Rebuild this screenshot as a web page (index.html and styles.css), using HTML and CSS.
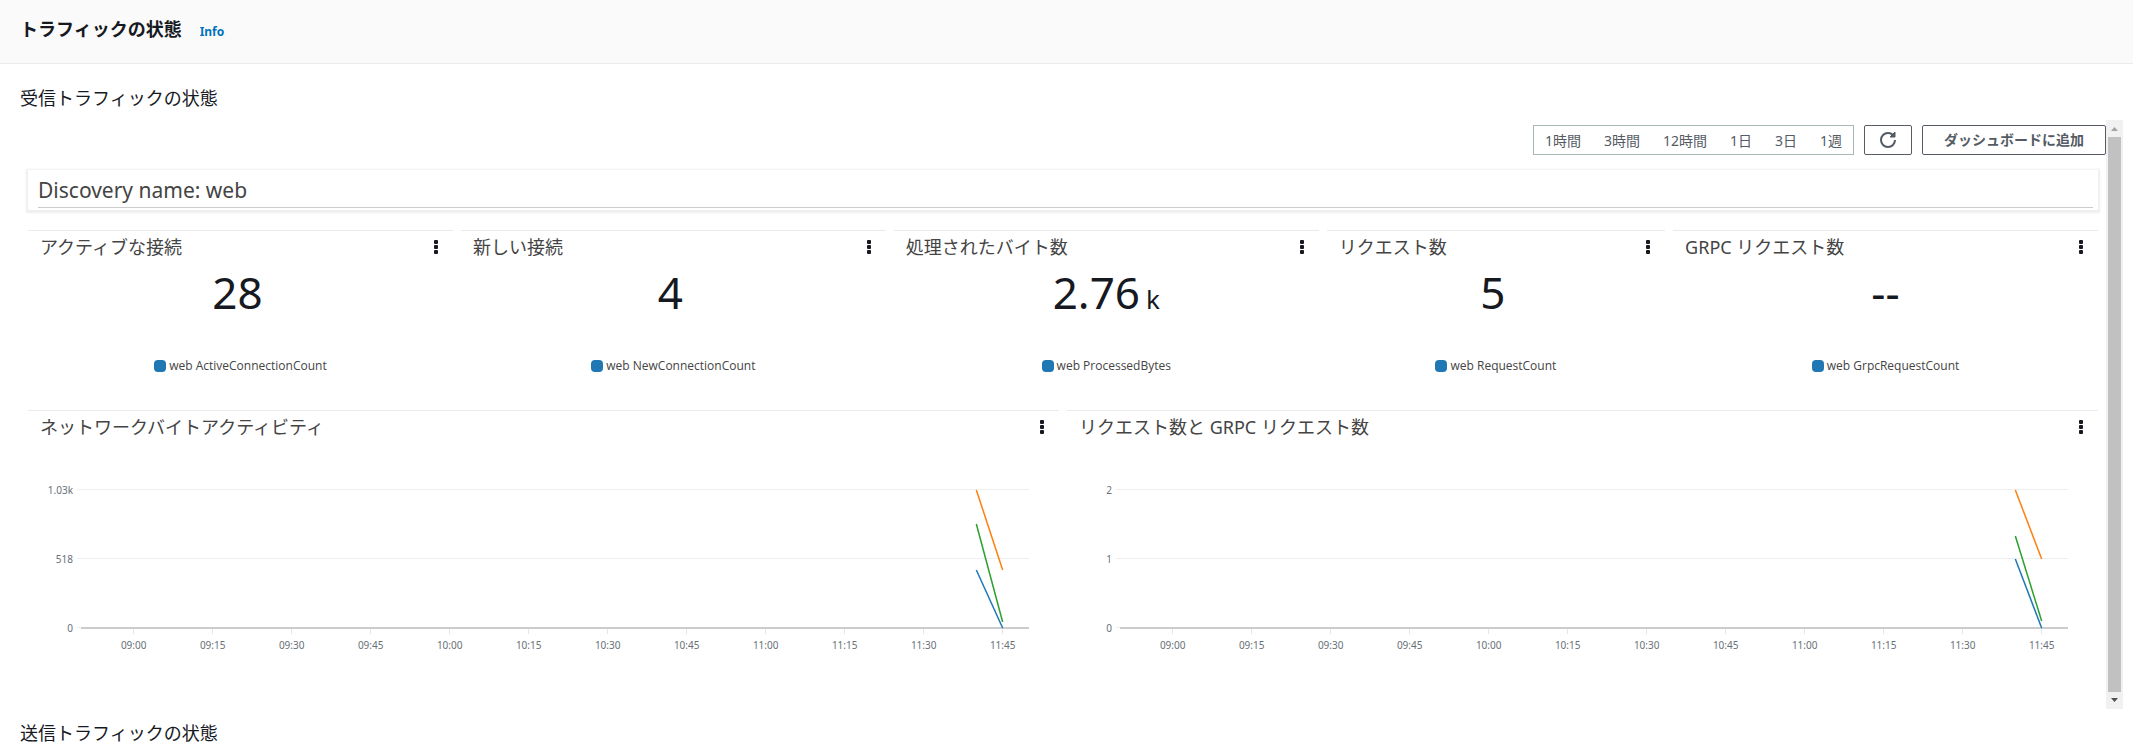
FILE: index.html
```html
<!DOCTYPE html>
<html lang="ja">
<head>
<meta charset="utf-8">
<meta name="viewport" content="width=device-width, initial-scale=1">
<title>トラフィックの状態</title>
<link rel="stylesheet" href="styles.css">
</head>
<body>
<header class="page-header">
  <h1>トラフィックの状態</h1>
  <a class="info" href="#info">Info</a>
</header>
<main>
  <section>
    <h2>受信トラフィックの状態</h2>
    <div class="scroller">
      <div class="dashboard">
        <div class="toolbar">
          <div class="ranges">
            <button type="button">1時間</button>
            <button type="button">3時間</button>
            <button type="button">12時間</button>
            <button type="button">1日</button>
            <button type="button">3日</button>
            <button type="button">1週</button>
          </div>
          <button type="button" class="btn refresh" aria-label="更新">
            <svg width="16" height="16" viewBox="0 0 16 16" fill="none" stroke="currentColor" stroke-width="2"><path d="M10 5h5V0z" fill="currentColor" stroke-width="1"/><path d="M15 8a6.957 6.957 0 0 1-7 7 6.957 6.957 0 0 1-7-7 6.957 6.957 0 0 1 7-7 6.870 6.870 0 0 1 6 3.500"/></svg>
          </button>
          <button type="button" class="btn add">ダッシュボードに追加</button>
        </div>
        <div class="text-widget"><h3>Discovery name: web</h3></div>
        <div class="grid">
          <article class="card">
            <div class="card-head"><h4>アクティブな接続</h4><button type="button" class="menu" aria-label="メニュー"><i></i><i></i><i></i></button></div>
            <p class="value">28<span class="unit"></span></p>
            <p class="legend"><span class="swatch"></span>web ActiveConnectionCount</p>
          </article>
          <article class="card">
            <div class="card-head"><h4>新しい接続</h4><button type="button" class="menu" aria-label="メニュー"><i></i><i></i><i></i></button></div>
            <p class="value">4<span class="unit"></span></p>
            <p class="legend"><span class="swatch"></span>web NewConnectionCount</p>
          </article>
          <article class="card">
            <div class="card-head"><h4>処理されたバイト数</h4><button type="button" class="menu" aria-label="メニュー"><i></i><i></i><i></i></button></div>
            <p class="value">2.76<span class="unit">k</span></p>
            <p class="legend"><span class="swatch"></span>web ProcessedBytes</p>
          </article>
          <article class="card narrow">
            <div class="card-head"><h4>リクエスト数</h4><button type="button" class="menu" aria-label="メニュー"><i></i><i></i><i></i></button></div>
            <p class="value">5<span class="unit"></span></p>
            <p class="legend"><span class="swatch"></span>web RequestCount</p>
          </article>
          <article class="card">
            <div class="card-head"><h4>GRPC リクエスト数</h4><button type="button" class="menu" aria-label="メニュー"><i></i><i></i><i></i></button></div>
            <p class="value">--</p>
            <p class="legend"><span class="swatch"></span>web GrpcRequestCount</p>
          </article>
          <article class="card wide">
            <div class="card-head"><h4>ネットワークバイトアクティビティ</h4><button type="button" class="menu" aria-label="メニュー"><i></i><i></i><i></i></button></div>
            <div class="chart">
              <div class="y-axis"><span>1.03k</span><span>518</span><span>0</span></div>
              <div class="plot">
                <svg viewBox="0 0 180 138" preserveAspectRatio="none" fill="none">
                  <path class="blue" d="M170 80L175 138"/><path class="orange" d="M170 0L175 80"/><path class="green" d="M170 34L175 132"/>
                </svg>
              </div>
              <div class="x-axis"><span>09:00</span><span>09:15</span><span>09:30</span><span>09:45</span><span>10:00</span><span>10:15</span><span>10:30</span><span>10:45</span><span>11:00</span><span>11:15</span><span>11:30</span><span>11:45</span></div>
            </div>
          </article>
          <article class="card wide">
            <div class="card-head"><h4>リクエスト数と GRPC リクエスト数</h4><button type="button" class="menu" aria-label="メニュー"><i></i><i></i><i></i></button></div>
            <div class="chart">
              <div class="y-axis"><span>2</span><span>1</span><span>0</span></div>
              <div class="plot">
                <svg viewBox="0 0 180 138" preserveAspectRatio="none" fill="none">
                  <path class="blue" d="M170 69L175 138"/><path class="orange" d="M170 0L175 69"/><path class="green" d="M170 46L175 131"/>
                </svg>
              </div>
              <div class="x-axis"><span>09:00</span><span>09:15</span><span>09:30</span><span>09:45</span><span>10:00</span><span>10:15</span><span>10:30</span><span>10:45</span><span>11:00</span><span>11:15</span><span>11:30</span><span>11:45</span></div>
            </div>
          </article>
        </div>
      </div>
      <div class="scrollbar" aria-hidden="true">
        <svg class="up" width="17" height="17" viewBox="0 0 17 17"><path d="M5 11L8.500 7L12 11z"/></svg>
        <div class="thumb"></div>
        <svg width="17" height="17" viewBox="0 0 17 17"><path d="M5 6L8.500 10L12 6z"/></svg>
      </div>
    </div>
  </section>
  <section class="outgoing">
    <h2>送信トラフィックの状態</h2>
  </section>
</main>
</body>
</html>
```
FILE: styles.css
```css
* { box-sizing: border-box; }
body {
  margin: 0;
  background: #fff;
  color: #16191f;
  font: 14px/22px "Noto Sans", "Noto Sans CJK JP", sans-serif;
}
h1, h2, h3, h4, p { margin: 0; font-weight: 400; }
button { font: inherit; cursor: pointer; }

.page-header {
  display: flex;
  align-items: center;
  gap: 18px;
  padding: 16px 20px 20px;
  background: #fafafa;
  border-bottom: 1px solid #eaeded;
}
h1 { font-size: 18px; line-height: 27px; font-weight: 700; }
.info { padding-top: 5px; font-size: 12px; font-weight: 700; color: #0073bb; text-decoration: none; }

main { padding: 0 10px 0 20px; }
h2 {
  padding: 20px 0 9px;
  font-size: 18px;
  line-height: 27px;
  font-family: "Noto Sans CJK JP", sans-serif;
}
.outgoing h2 { padding: 10px 0 0; }

.scroller { display: flex; }
.dashboard { flex: 1; min-width: 0; padding: 5px 0 9px 8px; }
.toolbar { display: flex; justify-content: flex-end; gap: 10px; }
.ranges { display: flex; gap: 1px; border: 1px solid #aab7b8; color: #545b64; }
.ranges button { padding: 2px 11px 0; border: 0; background: none; color: inherit; }
.btn {
  height: 30px;
  border: 1px solid #545b64;
  border-radius: 2px;
  background: #fff;
  color: #545b64;
}
.refresh { display: flex; align-items: center; justify-content: center; width: 48px; padding: 0; }
.add { padding: 0 21px; font-weight: 700; }

.text-widget {
  margin: 15px 8px 20px 0;
  padding: 6px 5px 2px 10px;
  box-shadow: 0 1px 2px 2px #eee;
}
.text-widget h3 {
  padding-bottom: 2px;
  border-bottom: 1px solid #ccc;
  font-size: 21px;
  line-height: 29px;
  color: #444;
}

.grid { display: grid; grid-template-columns: repeat(24, minmax(0, 1fr)); column-gap: 8px; margin-right: 8px; }
.card { grid-column: span 5; height: 180px; border-top: 1px solid #eaeaea; }
.card.narrow { grid-column: span 4; }
.card.wide { grid-column: span 12; height: 290px; }
.card-head { display: flex; justify-content: space-between; padding: 3px 12px 0; }
h4 { font-size: 18px; line-height: 27px; color: #444; white-space: nowrap; }
.menu {
  display: flex;
  flex-direction: column;
  align-items: center;
  gap: 1px;
  width: 10px;
  height: 20px;
  padding: 6px 0 0;
  border: 0;
  background: none;
}
.menu i { width: 4px; height: 4px; border-radius: 1px; background: #16191f; }
.value { text-align: center; font-size: 44px; line-height: 62px; }
.unit { margin-left: 6px; font-size: 26px; line-height: 1; }
.legend {
  display: flex;
  align-items: center;
  justify-content: center;
  gap: 3px;
  padding-top: 32px;
  font-family: "Open Sans", sans-serif;
  font-size: 12px;
  color: #444;
}
.swatch { width: 12px; height: 12px; border-radius: 4px; background: #1f77b4; }

.chart {
  display: grid;
  grid-template-columns: 45px minmax(0, 1fr);
  margin: 41px 30px 0 0;
  padding-left: 8px;
  font-size: 10px;
  line-height: 16px;
  color: #687078;
}
.y-axis { display: flex; flex-direction: column; justify-content: space-between; align-items: flex-end; height: 154px; padding-right: 8px; }
.plot {
  height: 141px;
  margin-top: 7px;
  margin-left: -4px;
  padding: 1px 0 0 4px;
  background: linear-gradient(#ccc, #ccc) 4px 138px / 100% 2px no-repeat, linear-gradient(#eee, #eee) 0 0 / 100% 1px no-repeat, linear-gradient(#eee, #eee) 0 69px / 100% 1px no-repeat, linear-gradient(#eee, #eee) 0 138px / 4px 1px no-repeat;
}
.plot svg { display: block; width: 100%; height: 138px; overflow: visible; }
.plot path { stroke-width: 1.500px; vector-effect: non-scaling-stroke; }
.blue { stroke: #1f77b4; }
.orange { stroke: #ff7f0e; }
.green { stroke: #2ca02c; }
.x-axis {
  grid-column: 2;
  display: grid;
  grid-template-columns: repeat(12, 1fr);
  margin: -7px -1.389% 0 1.389%;
  text-align: center;
}
.x-axis span::before { content: ""; display: block; width: 1px; height: 5px; margin: 0 auto 3px; background: #e5e5e5; }

.scrollbar { display: flex; flex-direction: column; width: 17px; background: #f1f1f1; fill: #505050; }
.scrollbar .up { fill: #a3a3a3; }
.thumb { flex: 1; margin: 0 2px; background: #c1c1c1; }
```
